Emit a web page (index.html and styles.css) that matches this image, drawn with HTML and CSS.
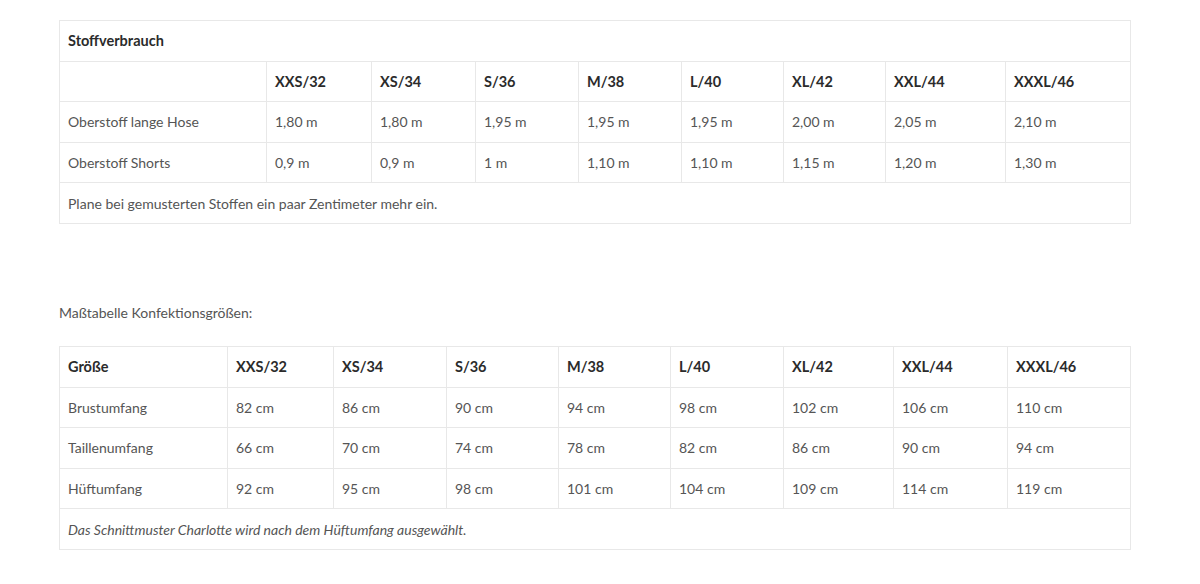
FILE: index.html
```html
<!DOCTYPE html>
<html lang="de">
<head>
    <meta charset="UTF-8">
    <meta name="viewport" content="width=device-width, initial-scale=1.0">
    <title>Schnittmuster Charlotte – Maße</title>
    <link rel="stylesheet" href="styles.css">
</head>
<body>
    <div class="content">
        <table class="size-table fabric">
            <colgroup>
                <col class="c-label1">
                <col style="width:105px"><col style="width:104px"><col style="width:103px">
                <col style="width:103px"><col style="width:102px"><col style="width:102px">
                <col style="width:120px"><col>
            </colgroup>
            <tr>
                <th colspan="9">Stoffverbrauch</th>
            </tr>
            <tr>
                <th></th>
                <th>XXS/32</th><th>XS/34</th><th>S/36</th><th>M/38</th>
                <th>L/40</th><th>XL/42</th><th>XXL/44</th><th>XXXL/46</th>
            </tr>
            <tr>
                <td>Oberstoff lange Hose</td>
                <td>1,80 m</td><td>1,80 m</td><td>1,95 m</td><td>1,95 m</td>
                <td>1,95 m</td><td>2,00 m</td><td>2,05 m</td><td>2,10 m</td>
            </tr>
            <tr>
                <td>Oberstoff Shorts</td>
                <td>0,9 m</td><td>0,9 m</td><td>1 m</td><td>1,10 m</td>
                <td>1,10 m</td><td>1,15 m</td><td>1,20 m</td><td>1,30 m</td>
            </tr>
            <tr>
                <td colspan="9">Plane bei gemusterten Stoffen ein paar Zentimeter mehr ein.</td>
            </tr>
        </table>

        <p class="intro">Maßtabelle Konfektionsgrößen:</p>

        <table class="size-table measures">
            <colgroup>
                <col style="width:168px">
                <col style="width:106px"><col style="width:113px"><col style="width:112px">
                <col style="width:112px"><col style="width:113px"><col style="width:110px">
                <col style="width:114px"><col>
            </colgroup>
            <tr>
                <th>Größe</th>
                <th>XXS/32</th><th>XS/34</th><th>S/36</th><th>M/38</th>
                <th>L/40</th><th>XL/42</th><th>XXL/44</th><th>XXXL/46</th>
            </tr>
            <tr>
                <td>Brustumfang</td>
                <td>82 cm</td><td>86 cm</td><td>90 cm</td><td>94 cm</td>
                <td>98 cm</td><td>102 cm</td><td>106 cm</td><td>110 cm</td>
            </tr>
            <tr>
                <td>Taillenumfang</td>
                <td>66 cm</td><td>70 cm</td><td>74 cm</td><td>78 cm</td>
                <td>82 cm</td><td>86 cm</td><td>90 cm</td><td>94 cm</td>
            </tr>
            <tr>
                <td>Hüftumfang</td>
                <td>92 cm</td><td>95 cm</td><td>98 cm</td><td>101 cm</td>
                <td>104 cm</td><td>109 cm</td><td>114 cm</td><td>119 cm</td>
            </tr>
            <tr>
                <td colspan="9" class="note">Das Schnittmuster Charlotte wird nach dem Hüftumfang ausgewählt.</td>
            </tr>
        </table>
    </div>
</body>
</html>
```

FILE: styles.css
```css
body {
    margin: 0;
    font-family: Lato, "Liberation Sans", sans-serif;
    font-size: 14px;
    color: #555;
    background: #fff;
}

.content {
    width: 1072px;
    padding: 20px 0 0 59px;
}

.size-table {
    width: 1072px;
    border-collapse: collapse;
    table-layout: fixed;
}

.size-table th,
.size-table td {
    border: 1px solid #e8e8e8;
    height: 39.6px;
    padding: 0 8px;
    text-align: left;
    vertical-align: middle;
}

.size-table th {
    font-weight: 700;
    font-size: 14.5px;
    color: #2b2b2b;
}

.size-table td {
    font-weight: 400;
}

.c-label1 {
    width: 207px;
}

.intro {
    margin: 79px 0 23px;
    line-height: 20px;
}

.note {
    font-style: italic;
}
```
